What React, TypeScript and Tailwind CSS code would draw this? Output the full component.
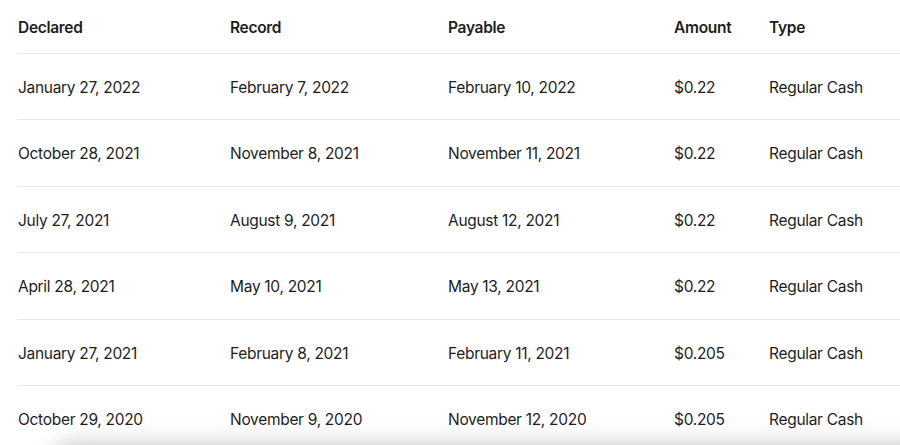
const rows = [
  ["January 27, 2022", "February 7, 2022", "February 10, 2022", "$0.22", "Regular Cash"],
  ["October 28, 2021", "November 8, 2021", "November 11, 2021", "$0.22", "Regular Cash"],
  ["July 27, 2021", "August 9, 2021", "August 12, 2021", "$0.22", "Regular Cash"],
  ["April 28, 2021", "May 10, 2021", "May 13, 2021", "$0.22", "Regular Cash"],
  ["January 27, 2021", "February 8, 2021", "February 11, 2021", "$0.205", "Regular Cash"],
  ["October 29, 2020", "November 9, 2020", "November 12, 2020", "$0.205", "Regular Cash"],
];

const headers = ["Declared", "Record", "Payable", "Amount", "Type"];

const cols = "grid grid-cols-[212px_218px_226px_95px_1fr] items-center pt-[2px]";

export default function App() {
  return (
    <div
      className="relative h-[445px] w-[900px] overflow-hidden bg-white pl-[18px] text-[15.5px] text-[#1d1d1f]"
      style={{ fontFamily: "Inter, 'Noto Sans', sans-serif" }}
    >
      <div className={`${cols} h-[54px] border-b border-[#e8e8e8] font-semibold tracking-[-0.3px]`}>
        {headers.map((h) => (
          <div key={h}>{h}</div>
        ))}
      </div>
      {rows.map((r) => (
        <div key={r[0]} className={`${cols} h-[66.4px] border-b border-[#e8e8e8] tracking-[-0.3px]`}>
          {r.map((c, i) => (
            <div key={i}>{c}</div>
          ))}
        </div>
      ))}

      {/* bottom sheet shadow */}
      <div className="absolute left-[40px] right-[-20px] top-[445px] h-[40px] rounded-tl-[40px] bg-white shadow-[0_-6px_18px_rgba(0,0,0,0.16)]" />
    </div>
  );
}
